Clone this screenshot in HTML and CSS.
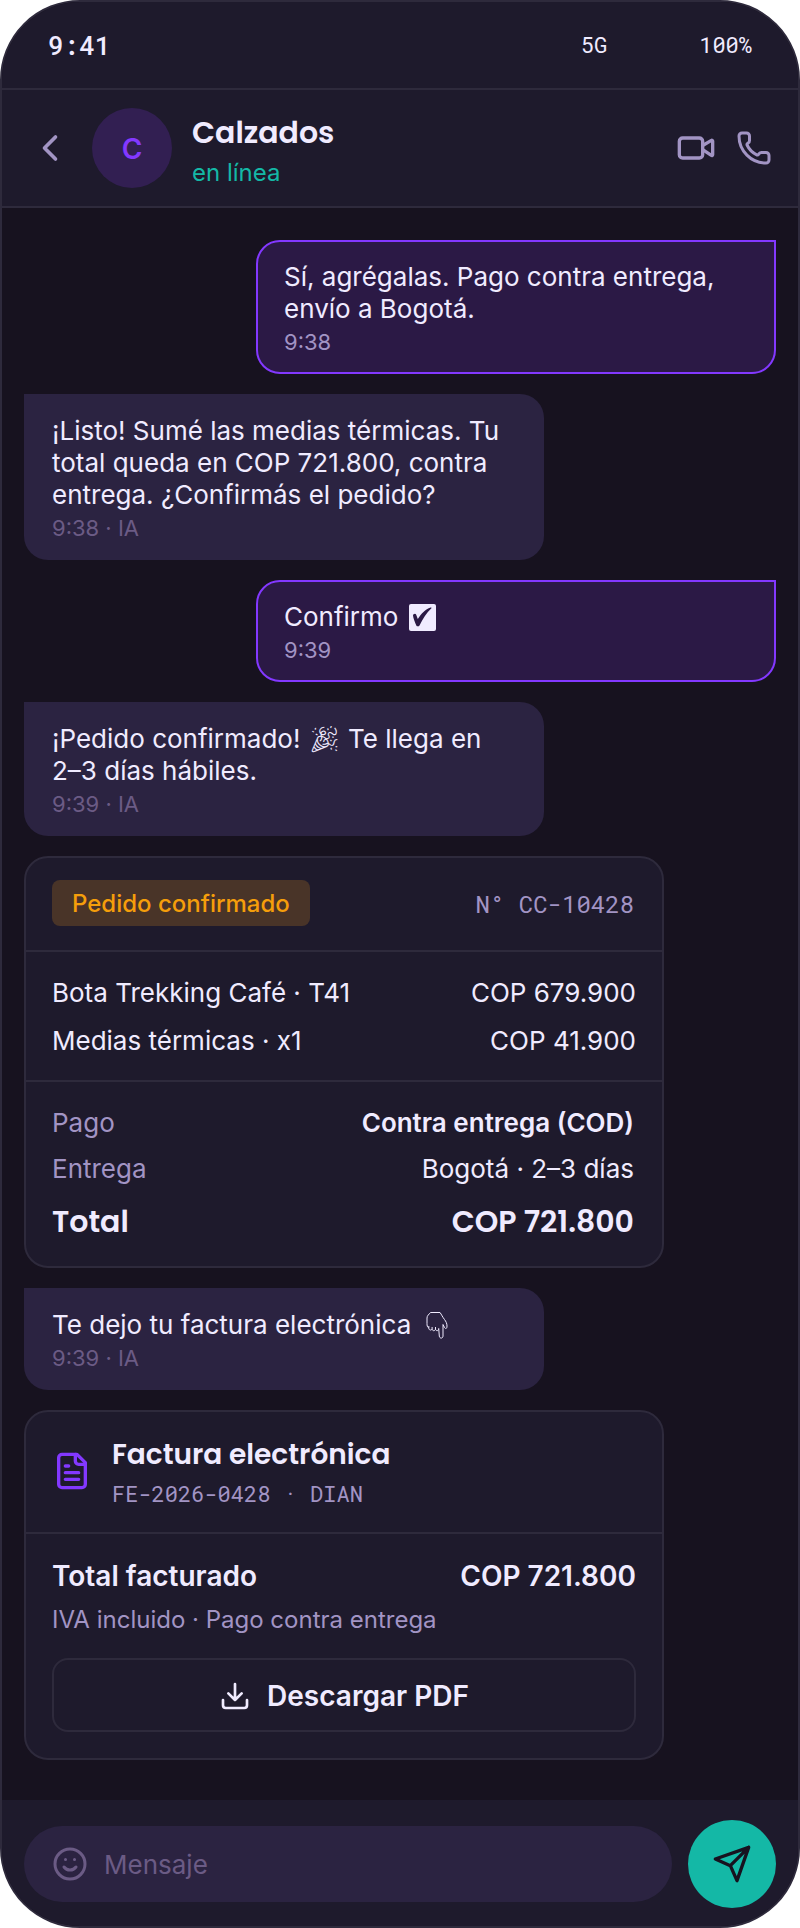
FILE: index.html
```
<!DOCTYPE html>
<html lang="es">
  <head>
    <meta charset="utf-8" />
    <meta name="viewport" content="width=device-width, initial-scale=1" />
    <title>Calzados</title>
    <link rel="stylesheet" href="styles.css" />
  </head>
  <body>
    <div class="phone">
      <div class="status-bar">
        <span class="clock">9:41</span>
        <div class="status-right">
          <span>5G</span>
          <span>100%</span>
        </div>
      </div>

      <header class="chat-header">
        <button class="icon-btn" aria-label="Volver">
          <svg class="icon icon-back" viewBox="0 0 24 24"><path d="m15 18-6-6 6-6" /></svg>
        </button>
        <div class="avatar">C</div>
        <div class="contact">
          <h1>Calzados</h1>
          <p>en línea</p>
        </div>
        <button class="icon-btn" aria-label="Videollamada">
          <svg class="icon icon-video" viewBox="0 0 24 24">
            <path d="m16 13 5.223 3.482a.5.5 0 0 0 .777-.416V7.870a.5.5 0 0 0-.752-.432L16 10.500" />
            <rect x="2" y="6" width="14" height="12" rx="2" />
          </svg>
        </button>
        <button class="icon-btn" aria-label="Llamar">
          <svg class="icon icon-phone" viewBox="0 0 24 24">
            <path d="M13.832 16.568a1 1 0 0 0 1.213-.303l.355-.465A2 2 0 0 1 17 15h3a2 2 0 0 1 2 2v3a2 2 0 0 1-2 2A18 18 0 0 1 2 4a2 2 0 0 1 2-2h3a2 2 0 0 1 2 2v3a2 2 0 0 1-.8 1.6l-.468.351a1 1 0 0 0-.292 1.233 14 14 0 0 0 6.392 6.384" />
          </svg>
        </button>
      </header>

      <main class="messages">
        <div class="bubble user">
          <p>Sí, agrégalas. Pago contra entrega, envío a Bogotá.</p>
          <time>9:38</time>
        </div>
        <div class="bubble bot">
          <p>¡Listo! Sumé las medias térmicas. Tu total queda en COP 721.800, contra entrega. ¿Confirmás el pedido?</p>
          <time>9:38 · IA</time>
        </div>
        <div class="bubble user">
          <p>
            Confirmo
            <svg class="emoji" viewBox="0 0 34 32" role="img" aria-label="✅">
              <rect x="3" y="3" width="27" height="27" rx="2" fill="currentColor" />
              <path class="tick" d="M7 14.500c0-1.500 2.500-2.500 3.200-.8l1.600 4.300C15 13 19.500 8.200 24.500 6.500c1-.3 1.300.5.7 1.100C20.500 12 17 17.500 13.500 24.500c-.6 1.100-2.600 1.200-3.200 0C9 21.500 7.200 17 7 14.500z" />
            </svg>
          </p>
          <time>9:39</time>
        </div>
        <div class="bubble bot">
          <p>¡Pedido confirmado! &#x1F389;&#xFE0E; Te llega en 2–3 días hábiles.</p>
          <time>9:39 · IA</time>
        </div>

        <!-- Order -->
        <section class="card">
          <div class="card-head order-head">
            <span class="badge">Pedido confirmado</span>
            <span class="order-number">N° CC-10428</span>
          </div>
          <div class="items">
            <div class="row"><span>Bota Trekking Café · T41</span><span>COP 679.900</span></div>
            <div class="row"><span>Medias térmicas · x1</span><span>COP 41.900</span></div>
          </div>
          <div class="summary">
            <div class="row"><span class="label">Pago</span><strong>Contra entrega (COD)</strong></div>
            <div class="row"><span class="label">Entrega</span><span>Bogotá · 2–3 días</span></div>
            <div class="row total"><span>Total</span><span>COP 721.800</span></div>
          </div>
        </section>

        <div class="bubble bot">
          <p>
            Te dejo tu factura electrónica
            <svg class="emoji" viewBox="0 0 34 32" role="img" aria-label="👇">
              <path class="outline" d="M11.500 3.500h9.500c1.500 2 2.500 4.500 4.500 7 1.500 2 2.500 4 2.500 6.500 0 3-1.500 3-2.500 1.500l-1.500-3M24 15.500v11.500c0 2.800-3.500 2.800-3.700 0l-.6-7.500M19.700 19.500c0 2.800-3 2.800-3.200.5v-2M16.500 20c-.3 2.300-3.200 2.200-3.400 0v-2M13.100 20c-1 1.800-3.300 1.200-3.300-1v-2M9.800 19c-1.600-.8-1.800-2.500-1.800-4.500V9c0-2.500 2-3.500 3.500-5.500" />
            </svg>
          </p>
          <time>9:39 · IA</time>
        </div>

        <!-- Invoice -->
        <section class="card">
          <div class="card-head invoice-head">
            <svg class="icon icon-file" viewBox="0 0 24 24">
              <path d="M15 2H6a2 2 0 0 0-2 2v16a2 2 0 0 0 2 2h12a2 2 0 0 0 2-2V7Z" />
              <path d="M14 2v4a2 2 0 0 0 2 2h4M10 9H8M16 13H8M16 17H8" />
            </svg>
            <div>
              <h2>Factura electrónica</h2>
              <p class="invoice-number">FE-2026-0428 · DIAN</p>
            </div>
          </div>
          <div class="invoice-body">
            <div class="row billed"><span>Total facturado</span><span>COP 721.800</span></div>
            <p class="note">IVA incluido · Pago contra entrega</p>
            <button class="download">
              <svg class="icon icon-download" viewBox="0 0 24 24">
                <path d="M21 15v4a2 2 0 0 1-2 2H5a2 2 0 0 1-2-2v-4M7 10l5 5 5-5M12 15V3" />
              </svg>
              Descargar PDF
            </button>
          </div>
        </section>
      </main>

      <form class="composer">
        <label class="field">
          <svg class="icon icon-smile" viewBox="0 0 24 24">
            <circle cx="12" cy="12" r="10" />
            <path d="M8 14s1.500 2 4 2 4-2 4-2M9 9h.01M15 9h.01" />
          </svg>
          <input type="text" placeholder="Mensaje" aria-label="Mensaje" />
        </label>
        <button class="send" type="button" aria-label="Enviar">
          <svg class="icon icon-send" viewBox="0 0 24 24"><path d="m22 2-7 20-4-9-9-4ZM22 2 11 13" /></svg>
        </button>
      </form>
    </div>
  </body>
</html>
```

FILE: styles.css
```
:root {
  --bg: #17121f;
  --surface: #1e1a2c;
  --raised: #2b2341;
  --line: #2e2a3c;
  --text: #f0ebff;
  --muted: #a294c4;
  --dim: #6b5b85;
  --purple: #8338ff;
  --teal: #14b8a6;
  --sans: Inter, "Liberation Sans", sans-serif;
  --display: Poppins, Inter, sans-serif;
  --mono: "Roboto Mono", "DejaVu Sans Mono", monospace;
}
* {
  box-sizing: border-box;
}
body {
  margin: 0;
  background: #fff;
  color: var(--text);
  font-family: var(--sans);
  font-size: 26px;
  line-height: 32px;
  font-variant-emoji: text;
}
h1,
h2,
p {
  margin: 0;
}
button,
input {
  font: inherit;
  color: inherit;
  border: none;
  background: none;
  padding: 0;
}
button {
  cursor: pointer;
}
.icon {
  display: block;
  flex: none;
  fill: none;
  stroke: currentColor;
  stroke-width: 2;
  stroke-linecap: round;
  stroke-linejoin: round;
}
.emoji {
  width: 34px;
  height: 32px;
  vertical-align: top;
}
.emoji .tick {
  fill: #2b1945;
}
.emoji .outline {
  fill: none;
  stroke: currentColor;
  stroke-width: 1;
  stroke-linejoin: round;
}

.phone {
  display: flex;
  flex-direction: column;
  min-height: 100vh;
  background: var(--bg);
  border: 2px solid var(--line);
  border-radius: 80px;
  overflow: hidden;
}

/* Status bar */
.status-bar {
  display: flex;
  justify-content: space-between;
  align-items: center;
  height: 88px;
  padding: 0 46px;
  background: var(--surface);
  border-bottom: 2px solid var(--line);
  font-family: var(--mono);
  font-size: 22px;
}
.clock {
  font-size: 26px;
  font-weight: 500;
}
.status-right {
  display: flex;
  gap: 92px;
}

/* Header */
.chat-header {
  display: flex;
  align-items: center;
  gap: 20px;
  padding: 18px 26px;
  background: var(--surface);
  border-bottom: 2px solid var(--line);
}
.icon-btn {
  color: var(--muted);
}
.icon-back {
  width: 44px;
  height: 44px;
}
.icon-video {
  width: 40px;
  height: 40px;
}
.icon-phone {
  width: 36px;
  height: 36px;
}
.avatar {
  display: flex;
  align-items: center;
  justify-content: center;
  width: 80px;
  height: 80px;
  padding-top: 2px;
  border-radius: 50%;
  background: #321f52;
  color: var(--purple);
  font-size: 28px;
  font-weight: 600;
}
.contact {
  flex: 1;
}
.contact h1 {
  font-family: var(--display);
  font-size: 30px;
  font-weight: 600;
  line-height: 50px;
}
.contact p {
  color: var(--teal);
  font-size: 24px;
  line-height: 30px;
}

/* Messages */
.messages {
  flex: 1;
  display: flex;
  flex-direction: column;
  align-items: flex-start;
  gap: 20px;
  padding: 32px 22px 40px;
}
.bubble {
  width: 520px;
  max-width: 100%;
  padding: 21px 28px 19px;
  border-radius: 24px;
}
.bubble time {
  display: block;
  margin-top: 4px;
  font-size: 22px;
  line-height: 26px;
}
.bot {
  background: var(--raised);
  border-top-left-radius: 0;
}
.bot time {
  color: var(--dim);
}
.user {
  align-self: flex-end;
  padding: 19px 26px 17px;
  background: #2b1945;
  border: 2px solid var(--purple);
  border-top-right-radius: 0;
}
.user time {
  color: var(--muted);
}

/* Cards */
.card {
  width: 640px;
  max-width: 100%;
  background: var(--surface);
  border: 2px solid var(--line);
  border-radius: 24px;
}
.card-head {
  display: flex;
  align-items: center;
  padding: 22px 26px 24px;
  border-bottom: 2px solid var(--line);
}
.order-head {
  justify-content: space-between;
}
.badge {
  padding: 9px 20px 7px;
  border-radius: 8px;
  background: #493428;
  color: #f59e0b;
  font-size: 24px;
  font-weight: 500;
  line-height: 30px;
}
.order-number {
  padding: 2px 2px 0 0;
  color: var(--muted);
  font-family: var(--mono);
  font-size: 24px;
}
.row {
  display: flex;
  justify-content: space-between;
}
.row strong {
  font-weight: 600;
}
.label {
  color: var(--muted);
}
.items {
  display: flex;
  flex-direction: column;
  gap: 16px;
  padding: 25px 26px 23px;
  border-bottom: 2px solid var(--line);
}
.summary {
  display: flex;
  flex-direction: column;
  gap: 14px;
  padding: 25px 28px 21px 26px;
}
.total {
  font-family: var(--display);
  font-size: 30px;
  font-weight: 600;
  line-height: 46px;
}

.invoice-head {
  gap: 20px;
}
.invoice-head h2 {
  font-family: var(--display);
  font-size: 28px;
  font-weight: 600;
  line-height: 42px;
}
.icon-file {
  width: 40px;
  height: 40px;
  color: var(--purple);
}
.invoice-number {
  margin-top: 4px;
  color: var(--muted);
  font-family: var(--mono);
  font-size: 22px;
  line-height: 28px;
}
.invoice-body {
  padding: 25px 26px 26px;
}
.billed {
  font-size: 28px;
  font-weight: 600;
  line-height: 34px;
}
.note {
  margin-top: 12px;
  color: var(--muted);
  font-size: 24px;
  line-height: 30px;
}
.download {
  display: flex;
  align-items: center;
  justify-content: center;
  gap: 16px;
  width: 100%;
  margin-top: 23px;
  padding: 19px 18px 17px;
  border: 2px solid var(--line);
  border-radius: 16px;
  font-size: 28px;
  font-weight: 600;
  line-height: 34px;
}
.icon-download {
  width: 32px;
  height: 32px;
}

/* Composer */
.composer {
  display: flex;
  align-items: center;
  gap: 16px;
  padding: 20px 22px 18px;
  background: var(--surface);
}
.field {
  flex: 1;
  display: flex;
  align-items: center;
  gap: 16px;
  padding: 20px 28px;
  border-radius: 40px;
  background: var(--raised);
  color: var(--dim);
}
.field input {
  flex: 1;
  min-width: 0;
  height: 36px;
  outline: none;
  color: var(--text);
}
.field input::placeholder {
  color: var(--dim);
  opacity: 1;
}
.icon-smile {
  width: 36px;
  height: 36px;
}
.send {
  display: flex;
  align-items: center;
  justify-content: center;
  width: 88px;
  height: 88px;
  border-radius: 50%;
  background: var(--teal);
  color: var(--bg);
}
.icon-send {
  width: 40px;
  height: 40px;
}
```
